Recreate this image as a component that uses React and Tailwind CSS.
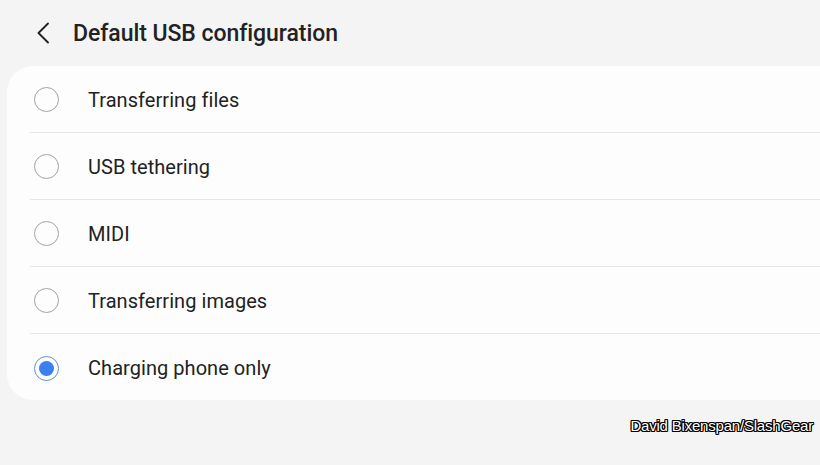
import React from "react";

const options = [
  { label: "Transferring files", selected: false },
  { label: "USB tethering", selected: false },
  { label: "MIDI", selected: false },
  { label: "Transferring images", selected: false },
  { label: "Charging phone only", selected: true },
];

const Radio = ({ selected }) =>
  selected ? (
    <span className="flex h-[25px] w-[25px] items-center justify-center rounded-full border-[1.5px] border-[#5b93d9]">
      <span className="h-[15px] w-[15px] rounded-full bg-[#3a80ee]" />
    </span>
  ) : (
    <span className="h-[25px] w-[25px] rounded-full border-[1.5px] border-[#a3a3a3]" />
  );

const App = () => {
  return (
    <div className="h-[465px] w-[820px] overflow-hidden bg-[#f4f4f4] font-['Roboto',sans-serif] text-[#222]">
      {/* Header */}
      <div className="flex h-[66px] items-center pb-[1px]">
        <div className="flex w-[73px] items-center pl-[36px] pt-[1px]">
          <svg width="14" height="22" viewBox="0 0 14 22" fill="none">
            <path d="M12 1.5 L2.5 11 L12 20.5" stroke="#222" strokeWidth="1.9" strokeLinecap="round" strokeLinejoin="round" />
          </svg>
        </div>
        <h1 className="mt-[3px] text-[23px] font-medium tracking-[-0.05px]">Default USB configuration</h1>
      </div>

      {/* Options card */}
      <div className="ml-[7px] h-[334px] rounded-l-[26px] bg-[#fdfdfd]">
        {options.map((opt, i) => (
          <div key={opt.label} className="flex h-[67px] flex-col">
            <div className="flex flex-1 items-center pt-[1px]">
              <div className="flex w-[81px] justify-center pr-[2px]">
                <Radio selected={opt.selected} />
              </div>
              <span className="text-[20px] tracking-[0.05px]">{opt.label}</span>
            </div>
            {i < options.length - 1 && <div className="ml-[23px] h-px bg-[#e6e6e6]" />}
          </div>
        ))}
      </div>

      {/* Credit */}
      <div className="flex justify-end pr-[7px] pt-[15px]">
        <span className="font-['Liberation_Sans',Arial,sans-serif] text-[15px] tracking-[-0.2px] text-white [text-shadow:1px_1px_0_#000,-1px_-1px_0_#000,1px_-1px_0_#000,-1px_1px_0_#000,0_1px_0_#000,0_-1px_0_#000,1px_0_0_#000,-1px_0_0_#000]">
          David Bixenspan/SlashGear
        </span>
      </div>
    </div>
  );
};

export default App;
